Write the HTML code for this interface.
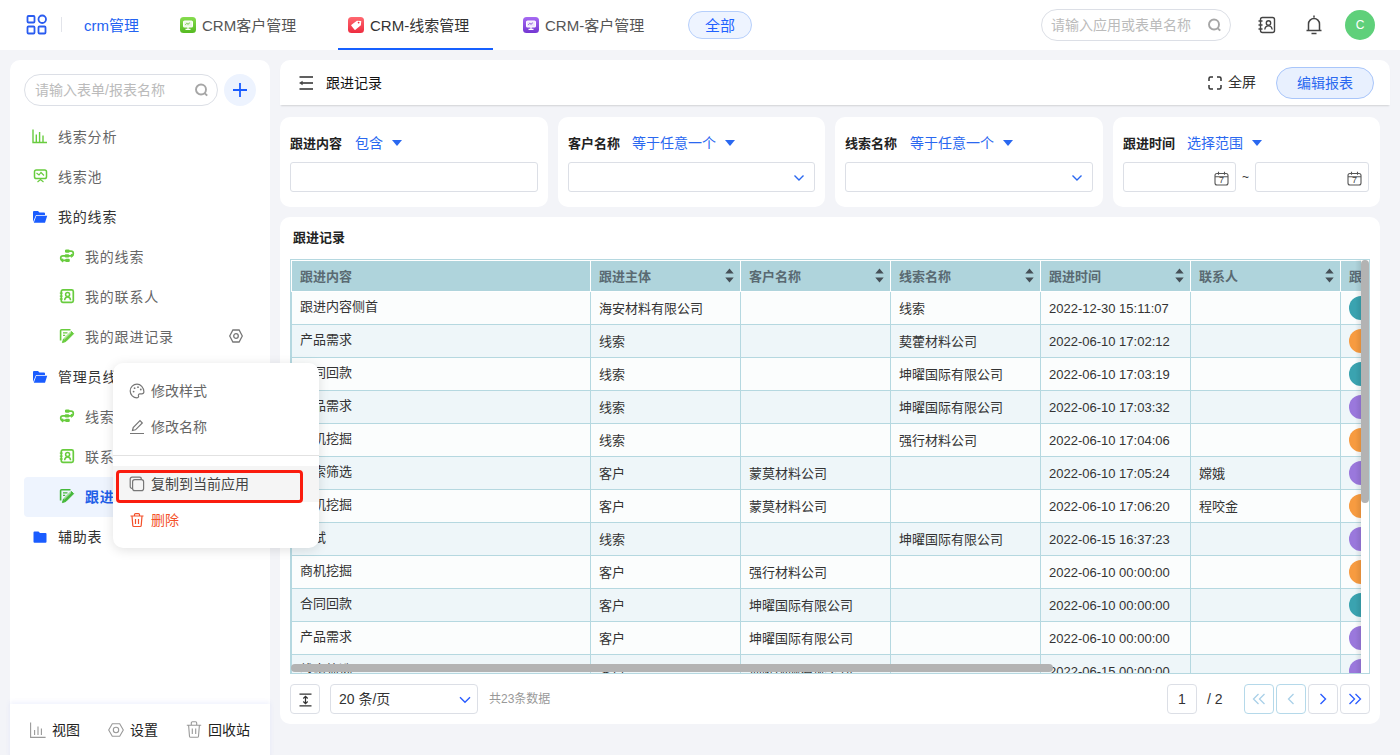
<!DOCTYPE html>
<html lang="zh-CN">
<head>
<meta charset="utf-8">
<title>CRM-线索管理</title>
<style>
*{box-sizing:border-box;margin:0;padding:0}
html,body{width:1400px;height:755px;overflow:hidden}
body{background:#f3f4f8;font-family:"Liberation Sans","Noto Sans CJK SC",sans-serif;font-size:14px;color:#333;position:relative}
.abs{position:absolute}
/* top bar */
#top{left:0;top:0;width:1400px;height:50px;background:#fff}
#top .t{position:absolute;top:1px;height:50px;line-height:50px;font-size:15px;color:#555;white-space:nowrap}
#top .blue{color:#2463f2}
.appico{position:absolute;top:17px;width:16px;height:16px;border-radius:3.500px}
/* sidebar */
#side{left:10px;top:60px;width:260px;height:700px;background:#fff;border-radius:10px 10px 0 0}
.search{position:absolute;border:1px solid #dcdfe6;border-radius:16px;background:#fff;color:#bbb;font-size:14px}
.nav{position:absolute;left:0;width:260px;height:40px;line-height:40px;font-size:14px;color:#666;white-space:nowrap}
.nav .ic{position:absolute;top:11px;width:16px;height:16px}
.nav .tx{position:absolute;top:0;letter-spacing:.8px}
/* main */
.card{position:absolute;background:#fff;border-radius:10px}
.flabel{position:absolute;top:16px;font-size:13px;font-weight:bold;color:#222;white-space:nowrap}
.fop{position:absolute;top:15px;font-size:14px;color:#2a68f0;white-space:nowrap}
.fin{position:absolute;top:45px;height:30px;border:1px solid #dcdfe6;border-radius:3px;background:#fff}
.tri{position:absolute;top:23px;width:0;height:0;border-left:5px solid transparent;border-right:5px solid transparent;border-top:6px solid #2a68f0}
/* table */
#tbl{position:absolute;left:290px;top:259px;width:1080px;height:415px;border:1px solid #b5d8e0;overflow:hidden;background:#fff}
table{border-collapse:separate;border-spacing:0;table-layout:fixed;width:1199px;font-size:13px;color:#333}
th{height:32px;background:#afd4dc;color:#5a6a72;font-weight:bold;text-align:left;padding:0 8px 2px;border-left:1px solid #fff;border-top:1px solid #fff;border-bottom:1px solid #fff;position:relative;white-space:nowrap}
td{height:33px;padding:0 8px 2px;border-left:1px solid #b5d8e0;border-bottom:1px solid #b5d8e0;white-space:nowrap;overflow:hidden}
tr:nth-child(odd) td{background:#fbfdfd}
tr:nth-child(even) td{background:#eef6f9}
.sort{position:absolute;right:6px;top:7px;width:9px;height:15px}
td:first-child{padding-bottom:6px}td:nth-child(5){padding-bottom:0}td.avc{padding:0 8px}.av{display:block;width:24px;height:24px;border-radius:12px;margin:0}
/* popup */
#pop{left:113px;top:363px;width:206px;height:185px;background:#fff;border-radius:10px;box-shadow:0 2px 12px rgba(0,0,0,.12)}
.mi{position:absolute;left:0;width:206px;height:36px;line-height:36px;font-size:14px;color:#666}
.mi span{position:absolute;left:38px;top:0;white-space:nowrap}
.mi svg{position:absolute;left:16px;top:10px}
/* pager */
.pbtn{position:absolute;top:684px;height:30px;border:1px solid #dcdfe6;border-radius:4px;background:#fff}
</style>
</head>
<body>

<!-- TOP BAR -->
<div id="top" class="abs">
  <svg class="abs" style="left:26px;top:14px" width="22" height="22" viewBox="0 0 22 22" fill="none" stroke="#2a5cf0" stroke-width="1.8">
    <rect x="1.5" y="2" width="7" height="6.5" rx="1"/><rect x="12.5" y="1.5" width="7.5" height="7.5" rx="3.7"/>
    <rect x="1.5" y="12.5" width="7" height="7" rx="1"/><rect x="12.5" y="12.5" width="7" height="7" rx="1"/>
  </svg>
  <div class="abs" style="left:61px;top:17px;width:1px;height:15px;background:#e2e4ea"></div>
  <div class="t blue" style="left:84px">crm管理</div>
  <svg class="appico" style="left:180px;background:linear-gradient(#86dc4e,#55ba22)" viewBox="0 0 16 16" fill="none" stroke="#fff" stroke-width="1.200"><rect x="3.600" y="4" width="8.800" height="6" rx="1" fill="#fff" fill-opacity=".85"/><path d="M8 10v1.800M5.500 12.300h5"/><path d="M5.300 7.800l1.500-1.500 1.200 1 1.800-1.500" stroke="#55ba22" stroke-width=".8"/></svg>
  <div class="t" style="left:202px">CRM客户管理</div>
  <svg class="appico" style="left:348px;background:linear-gradient(#ff6870,#ee2c40)" viewBox="0 0 16 16"><path d="M8.300 3.600l4.300-.4.300 4.400-4.800 5.200a.8.800 0 0 1-1.100 0L3.500 9.500a.8.800 0 0 1 0-1.100z" fill="#fff" transform="rotate(8 8 8)"/><circle cx="10.600" cy="5.600" r=".9" fill="#ee2c40"/></svg>
  <div class="t" style="left:370px;color:#333">CRM-线索管理</div>
  <div class="abs" style="left:338px;top:48px;width:155px;height:2px;background:#1660ff"></div>
  <svg class="appico" style="left:523px;background:linear-gradient(#a66af2,#7436d2)" viewBox="0 0 16 16" fill="none" stroke="#fff" stroke-width="1.200"><rect x="3.600" y="4" width="8.800" height="6" rx="1" fill="#fff" fill-opacity=".85"/><path d="M8 10v1.800M5.500 12.300h5"/><path d="M5.300 7.800l1.500-1.500 1.200 1 1.800-1.500" stroke="#7436d2" stroke-width=".8"/></svg>
  <div class="t" style="left:545px">CRM-客户管理</div>
  <div class="abs blue" style="left:688px;top:11px;width:64px;height:28px;border:1px solid #b6cffb;background:#eef4ff;border-radius:14px;text-align:center;line-height:27px;font-size:15px;color:#1f62ff">全部</div>
  <div class="search" style="left:1041px;top:9px;width:190px;height:32px;line-height:30px;padding-left:9px">请输入应用或表单名称</div>
  <svg class="abs" style="left:1207px;top:17px" width="16" height="16" viewBox="0 0 16 16" fill="none" stroke="#a6a6a6" stroke-width="1.9"><circle cx="7" cy="7.5" r="5"/><path d="M10.8 11.3l2.4 2.4"/></svg>
  <svg class="abs" style="left:1257px;top:15px" width="20" height="20" viewBox="0 0 20 20" fill="none" stroke="#444" stroke-width="1.4"><rect x="3.5" y="2.5" width="14" height="15" rx="2"/><path d="M1.5 6h4M1.5 10h4M1.5 14h4"/><circle cx="11.5" cy="8" r="2.2"/><path d="M7.8 14.5c.3-2.4 1.8-3.6 3.7-3.6s3.4 1.2 3.7 3.6"/></svg>
  <svg class="abs" style="left:1304px;top:14px" width="20" height="22" viewBox="0 0 20 22" fill="none" stroke="#444" stroke-width="1.5"><path d="M10 1.5v2M4.5 16V10a5.5 5.500 0 0 1 11 0v6M2.5 16.500h15M7.500 19.500h5"/></svg>
  <div class="abs" style="left:1345px;top:10px;width:30px;height:30px;border-radius:15px;background:#5fd07a;color:#fff;text-align:center;line-height:30px;font-size:12px">C</div>
</div>

<!-- SIDEBAR -->
<div id="side" class="abs">
  <div class="search" style="left:14px;top:14px;width:194px;height:32px;line-height:30px;padding-left:10px">请输入表单/报表名称</div>
  <svg class="abs" style="left:184px;top:22px" width="16" height="16" viewBox="0 0 16 16" fill="none" stroke="#a6a6a6" stroke-width="1.9"><circle cx="7" cy="7.5" r="5"/><path d="M10.8 11.3l2.4 2.4"/></svg>
  <div class="abs" style="left:214px;top:14px;width:32px;height:32px;border-radius:16px;background:#edf3fe"></div>
  <svg class="abs" style="left:222px;top:22px" width="16" height="16" viewBox="0 0 16 16" stroke="#1a5cff" stroke-width="1.8"><path d="M8 1v14M1 8h14"/></svg>

  <div class="nav" style="top:57px"><svg class="ic" style="left:22px" viewBox="0 0 16 16" fill="none" stroke="#68cc3e" stroke-width="1.4"><path d="M1 1.500v13h14M4.300 6.500v8M7.600 4v10.500M11 7.500v7"/></svg><span class="tx" style="left:48px">线索分析</span></div>
  <div class="nav" style="top:97px"><svg class="ic" style="left:23px" viewBox="0 0 16 16" fill="none" stroke="#68cc3e" stroke-width="1.5"><rect x="1.500" y="2" width="12" height="8.500" rx="1.800"/><path d="M3.500 5l2.500 2 2-2.500 3 3M7.500 10.500v1M4.500 14l3-2.500 3 2.500" stroke-width="1.200"/></svg><span class="tx" style="left:48px">线索池</span></div>
  <div class="nav" style="top:137px;color:#333"><svg class="ic" style="left:22px" viewBox="0 0 16 16"><g transform="translate(0,1)"><path d="M1 3a1 1 0 0 1 1-1h4l1.500 1.500H12a1 1 0 0 1 1 1V6H4L1 13z" fill="#1a5cff"/><path d="M4.300 6.700H15.200L13 13.800H1.800z" fill="#1a5cff"/></g></svg><span class="tx" style="left:48px">我的线索</span></div>
  <div class="nav" style="top:177px"><svg class="ic" style="left:49px" viewBox="0 0 16 16" fill="none" stroke="#68cc3e" stroke-width="1.700"><path d="M6 3.200h6a2.300 2.300 0 0 1 0 4.600H4a2.300 2.300 0 0 0 0 4.600h5"/><rect x="6" y="1.600" width="4.600" height="3.200" rx="1.200" fill="#68cc3e" stroke="none"/><rect x="5.700" y="6.200" width="4.600" height="3.200" rx="1.200" fill="#68cc3e" stroke="none"/><rect x="6.200" y="10.800" width="4.600" height="3.200" rx="1.200" fill="#68cc3e" stroke="none"/><path d="M12 6.200l1.800 1.600L12 9.400M4.200 10.800l-1.800 1.600 1.800 1.600" stroke-width="1.200"/></svg><span class="tx" style="left:75px">我的线索</span></div>
  <div class="nav" style="top:217px"><svg class="ic" style="left:49px" viewBox="0 0 16 16" fill="none" stroke="#68cc3e" stroke-width="1.700"><rect x="2.300" y="1.800" width="12" height="12.600" rx="1.600"/><path d="M.8 5.200h2.800M.8 8.100h2.800M.8 11h2.800" stroke-width="1.300"/><circle cx="8.600" cy="6.400" r="2" stroke-width="1.500"/><path d="M5.600 12.200c.2-2.200 1.400-3.300 3-3.300s2.800 1.100 3 3.300" stroke-width="1.500"/></svg><span class="tx" style="left:75px">我的联系人</span></div>
  <div class="nav" style="top:257px"><svg class="ic" style="left:49px" viewBox="0 0 16 16" fill="none" stroke="#68cc3e" stroke-width="1.600"><path d="M11.500 1.800H2.600a1 1 0 0 0-1 1V12.500"/><path d="M4 4.800h4.500M4 7.400h2.200" stroke-width="1.300"/><path d="M12.300 3.400l2.300 2.300-7.800 7.800-3.400 1.100 1.100-3.400z" fill="#68cc3e" stroke-width="1"/><path d="M5.200 11.200l6.800-6.800" stroke="#fff" stroke-width=".7"/></svg><span class="tx" style="left:75px">我的跟进记录</span></div>
<svg class="abs" style="left:219px;top:269px" width="14" height="14" viewBox="0 0 14 14" fill="none" stroke="#777" stroke-width="1.300"><path d="M3.900 1h6.200L13.300 7l-3.200 6H3.900L.7 7z"/><circle cx="7" cy="7" r="2.300"/></svg>
  <div class="nav" style="top:297px;color:#333"><svg class="ic" style="left:22px" viewBox="0 0 16 16"><g transform="translate(0,1)"><path d="M1 3a1 1 0 0 1 1-1h4l1.500 1.500H12a1 1 0 0 1 1 1V6H4L1 13z" fill="#1a5cff"/><path d="M4.300 6.700H15.200L13 13.800H1.800z" fill="#1a5cff"/></g></svg><span class="tx" style="left:48px">管理员线索</span></div>
  <div class="nav" style="top:337px"><svg class="ic" style="left:49px" viewBox="0 0 16 16" fill="none" stroke="#68cc3e" stroke-width="1.700"><path d="M6 3.200h6a2.300 2.300 0 0 1 0 4.600H4a2.300 2.300 0 0 0 0 4.600h5"/><rect x="6" y="1.600" width="4.600" height="3.200" rx="1.200" fill="#68cc3e" stroke="none"/><rect x="5.700" y="6.200" width="4.600" height="3.200" rx="1.200" fill="#68cc3e" stroke="none"/><rect x="6.200" y="10.800" width="4.600" height="3.200" rx="1.200" fill="#68cc3e" stroke="none"/><path d="M12 6.200l1.800 1.600L12 9.400M4.200 10.800l-1.800 1.600 1.800 1.600" stroke-width="1.200"/></svg><span class="tx" style="left:75px">线索</span></div>
  <div class="nav" style="top:377px"><svg class="ic" style="left:49px" viewBox="0 0 16 16" fill="none" stroke="#68cc3e" stroke-width="1.700"><rect x="2.300" y="1.800" width="12" height="12.600" rx="1.600"/><path d="M.8 5.200h2.800M.8 8.100h2.800M.8 11h2.800" stroke-width="1.300"/><circle cx="8.600" cy="6.400" r="2" stroke-width="1.500"/><path d="M5.600 12.200c.2-2.200 1.400-3.300 3-3.300s2.800 1.100 3 3.300" stroke-width="1.500"/></svg><span class="tx" style="left:75px">联系人</span></div>
  <div class="abs" style="left:14px;top:417px;width:232px;height:40px;background:#eef4fe;border-radius:4px"></div>
  <div class="nav" style="top:417px;color:#1f5fe8;font-weight:bold"><svg class="ic" style="left:49px" viewBox="0 0 16 16" fill="none" stroke="#45b83a" stroke-width="1.600"><path d="M11.500 1.800H2.600a1 1 0 0 0-1 1V12.500"/><path d="M4 4.800h4.500M4 7.400h2.200" stroke-width="1.300"/><path d="M12.300 3.400l2.300 2.300-7.800 7.800-3.400 1.100 1.100-3.400z" fill="#45b83a" stroke-width="1"/><path d="M5.200 11.200l6.800-6.800" stroke="#fff" stroke-width=".7"/></svg><span class="tx" style="left:75px">跟进记录</span></div>
  <div class="nav" style="top:457px;color:#333"><svg class="ic" style="left:22px" viewBox="0 0 16 16"><path transform="translate(0,1)" d="M1.500 3.500a1 1 0 0 1 1-1h4l1.500 1.500H13.500a1 1 0 0 1 1 1V12.800a1 1 0 0 1-1 1h-11a1 1 0 0 1-1-1z" fill="#1a5cff"/></svg><span class="tx" style="left:48px">辅助表</span></div>

  <div class="abs" style="left:0;top:644px;width:260px;height:56px;box-shadow:0 -2px 5px rgba(90,110,230,.09);background:#fff"></div>
  <svg class="abs" style="left:20px;top:662px" width="16" height="16" viewBox="0 0 16 16" fill="none" stroke="#999" stroke-width="1.100"><path d="M.6 .5v14.900h15M4.600 8v5M8 4.500v8.500M11.400 6.500v6.500"/></svg>
  <svg class="abs" style="left:98px;top:663px" width="16" height="14" viewBox="0 0 16 14" fill="none" stroke="#999" stroke-width="1.100"><path d="M4.300 .8h7.400L15.300 7l-3.600 6.200H4.300L.7 7z"/><circle cx="8" cy="7" r="2.700"/></svg>
  <svg class="abs" style="left:176px;top:661px" width="16" height="17" viewBox="0 0 16 17" fill="none" stroke="#999" stroke-width="1.100"><path d="M.8 4.200h14.400M5.300 4V2a1.200 1.200 0 0 1 1.200-1.200h3A1.200 1.200 0 0 1 10.700 2v2M2.600 4.200l.9 11a1.200 1.200 0 0 0 1.200 1.100h6.600a1.200 1.200 0 0 0 1.200-1.100l.9-11M6.300 7.500v5.500M9.700 7.500v5.500"/></svg>
  <div class="nav" style="top:650px;color:#222;font-size:14px"><span class="tx" style="left:42px;letter-spacing:0">视图</span><span class="tx" style="left:120px;letter-spacing:0">设置</span><span class="tx" style="left:198px;letter-spacing:0">回收站</span></div>
</div>

<!-- MAIN HEADER -->
<div class="card" style="left:280px;top:60px;width:1110px;height:45px;border-radius:10px 10px 0 0;box-shadow:0 2px 2px -1px rgba(0,0,0,.14)">
  <svg class="abs" style="left:19px;top:16px" width="14" height="14" viewBox="0 0 14 14" fill="none" stroke="#606060" stroke-width="1.800"><path d="M.5 1h13.500M3 7h11M.5 13h13.500"/><path d="M0 7l3.600-2.300v4.600z" fill="#444" stroke="none"/></svg>
  <div class="abs" style="left:46px;top:1px;line-height:45px;font-size:14px;color:#111">跟进记录</div>
  <svg class="abs" style="left:928px;top:16px" width="14" height="14" viewBox="0 0 14 14" fill="none" stroke="#333" stroke-width="1.5"><path d="M1 5V2.500A1.500 1.500 0 0 1 2.500 1H5M9 1h2.500A1.500 1.500 0 0 1 13 2.500V5M13 9v2.500a1.500 1.500 0 0 1-1.500 1.500H9M5 13H2.500A1.500 1.500 0 0 1 1 11.500V9"/></svg>
  <div class="abs" style="left:948px;top:0;line-height:45px;font-size:14px;color:#333">全屏</div>
  <div class="abs" style="left:996px;top:7px;width:98px;height:32px;border:1px solid #a9c6fa;background:#e8f0fe;border-radius:16px;text-align:center;line-height:30px;font-size:14px;color:#2a68f0">编辑报表</div>
</div>

<!-- FILTERS -->
<div class="card" style="left:280px;top:117px;width:268px;height:90px">
  <div class="flabel" style="left:10px">跟进内容</div><div class="fop" style="left:75px">包含</div><div class="tri" style="left:112px"></div>
  <div class="fin" style="left:10px;width:248px"></div>
</div>
<div class="card" style="left:558px;top:117px;width:267px;height:90px">
  <div class="flabel" style="left:10px">客户名称</div><div class="fop" style="left:74px">等于任意一个</div><div class="tri" style="left:167px"></div>
  <div class="fin" style="left:10px;width:247px"></div>
  <svg class="abs" style="left:235px;top:57px" width="12" height="8" viewBox="0 0 12 8" fill="none" stroke="#2a68f0" stroke-width="1.4"><path d="M1.500 1.500L6 6l4.500-4.500"/></svg>
</div>
<div class="card" style="left:835px;top:117px;width:268px;height:90px">
  <div class="flabel" style="left:10px">线索名称</div><div class="fop" style="left:75px">等于任意一个</div><div class="tri" style="left:168px"></div>
  <div class="fin" style="left:10px;width:248px"></div>
  <svg class="abs" style="left:236px;top:57px" width="12" height="8" viewBox="0 0 12 8" fill="none" stroke="#2a68f0" stroke-width="1.4"><path d="M1.500 1.500L6 6l4.500-4.500"/></svg>
</div>
<div class="card" style="left:1113px;top:117px;width:267px;height:90px">
  <div class="flabel" style="left:10px">跟进时间</div><div class="fop" style="left:74px">选择范围</div><div class="tri" style="left:139px"></div>
  <div class="fin" style="left:10px;width:113px"></div>
  <svg class="abs" style="left:101px;top:54px" width="15" height="15" viewBox="0 0 15 15" fill="none" stroke="#555" stroke-width="1.100"><rect x="1" y="2.500" width="13" height="11.500" rx="2"/><path d="M1 5.800h13M4.500 .8v3M10.500 .8v3"/><text x="7.500" y="12.300" font-size="9" text-anchor="middle" fill="#444" stroke="none" font-family="Liberation Sans,sans-serif">7</text></svg>
  <div class="abs" style="left:129px;top:53px;font-size:12px;color:#333">~</div>
  <div class="fin" style="left:142px;width:114px"></div>
  <svg class="abs" style="left:234px;top:54px" width="15" height="15" viewBox="0 0 15 15" fill="none" stroke="#555" stroke-width="1.100"><rect x="1" y="2.500" width="13" height="11.500" rx="2"/><path d="M1 5.800h13M4.500 .8v3M10.500 .8v3"/><text x="7.500" y="12.300" font-size="9" text-anchor="middle" fill="#444" stroke="none" font-family="Liberation Sans,sans-serif">7</text></svg>
</div>

<!-- TABLE CARD -->
<div class="card" style="left:280px;top:217px;width:1100px;height:507px">
  <div class="abs" style="left:13px;top:10px;font-size:13px;font-weight:bold;color:#222">跟进记录</div>
</div>
<div id="tbl">
<table>
<colgroup><col style="width:299px"><col style="width:150px"><col style="width:150px"><col style="width:150px"><col style="width:150px"><col style="width:150px"><col style="width:150px"></colgroup>
<thead><tr><th>跟进内容</th><th>跟进主体<svg class="sort" viewBox="0 0 9 15"><path d="M4.500 0.500L8.700 5.500H.3zM4.500 14.500L.3 9.500h8.400z" fill="#454f57"/></svg></th><th>客户名称<svg class="sort" viewBox="0 0 9 15"><path d="M4.500 0.500L8.700 5.500H.3zM4.500 14.500L.3 9.500h8.400z" fill="#454f57"/></svg></th><th>线索名称<svg class="sort" viewBox="0 0 9 15"><path d="M4.500 0.500L8.700 5.500H.3zM4.500 14.500L.3 9.500h8.400z" fill="#454f57"/></svg></th><th>跟进时间<svg class="sort" viewBox="0 0 9 15"><path d="M4.500 0.500L8.700 5.500H.3zM4.500 14.500L.3 9.500h8.400z" fill="#454f57"/></svg></th><th>联系人<svg class="sort" viewBox="0 0 9 15"><path d="M4.500 0.500L8.700 5.500H.3zM4.500 14.500L.3 9.500h8.400z" fill="#454f57"/></svg></th><th>跟进人</th></tr></thead>
<tbody>
<tr><td>跟进内容侧首</td><td>海安材料有限公司</td><td></td><td>线索</td><td>2022-12-30 15:11:07</td><td></td><td class="avc"><i class="av" style="background:#3aa3b0"></i></td></tr>
<tr><td>产品需求</td><td>线索</td><td></td><td>葜藿材料公司</td><td>2022-06-10 17:02:12</td><td></td><td class="avc"><i class="av" style="background:#f79b40"></i></td></tr>
<tr><td>合同回款</td><td>线索</td><td></td><td>坤曜国际有限公司</td><td>2022-06-10 17:03:19</td><td></td><td class="avc"><i class="av" style="background:#3aa3b0"></i></td></tr>
<tr><td>产品需求</td><td>线索</td><td></td><td>坤曜国际有限公司</td><td>2022-06-10 17:03:32</td><td></td><td class="avc"><i class="av" style="background:#9a78dc"></i></td></tr>
<tr><td>商机挖掘</td><td>线索</td><td></td><td>强行材料公司</td><td>2022-06-10 17:04:06</td><td></td><td class="avc"><i class="av" style="background:#f79b40"></i></td></tr>
<tr><td>线索筛选</td><td>客户</td><td>蒙莫材料公司</td><td></td><td>2022-06-10 17:05:24</td><td>嫦娥</td><td class="avc"><i class="av" style="background:#9a78dc"></i></td></tr>
<tr><td>商机挖掘</td><td>客户</td><td>蒙莫材料公司</td><td></td><td>2022-06-10 17:06:20</td><td>程咬金</td><td class="avc"><i class="av" style="background:#f79b40"></i></td></tr>
<tr><td>测试</td><td>线索</td><td></td><td>坤曜国际有限公司</td><td>2022-06-15 16:37:23</td><td></td><td class="avc"><i class="av" style="background:#9a78dc"></i></td></tr>
<tr><td>商机挖掘</td><td>客户</td><td>强行材料公司</td><td></td><td>2022-06-10 00:00:00</td><td></td><td class="avc"><i class="av" style="background:#f79b40"></i></td></tr>
<tr><td>合同回款</td><td>客户</td><td>坤曜国际有限公司</td><td></td><td>2022-06-10 00:00:00</td><td></td><td class="avc"><i class="av" style="background:#3aa3b0"></i></td></tr>
<tr><td>产品需求</td><td>客户</td><td>坤曜国际有限公司</td><td></td><td>2022-06-10 00:00:00</td><td></td><td class="avc"><i class="av" style="background:#9a78dc"></i></td></tr>
<tr><td>线索筛选</td><td>客户</td><td>坤曜国际有限公司</td><td></td><td>2022-06-15 00:00:00</td><td></td><td class="avc"><i class="av" style="background:#9a78dc"></i></td></tr>
</tbody>
</table>
</div>
<!-- scrollbars -->
<div class="abs" style="left:1355px;top:260px;width:6px;height:413px;background:linear-gradient(90deg,rgba(0,0,0,0),rgba(0,0,0,.09))"></div>
<div class="abs" style="left:1361px;top:260px;width:8px;height:413px;background:#fff"></div>
<div class="abs" style="left:291px;top:664px;width:762px;height:8px;border-radius:4px;background:#b3b3b3"></div>
<div class="abs" style="left:1361px;top:260px;width:8px;height:243px;border-radius:4px;background:#b3b3b3"></div>

<!-- PAGER -->
<div class="pbtn" style="left:290px;width:30px"><svg class="abs" style="left:8px;top:8px" width="13" height="14" viewBox="0 0 13 14" fill="none" stroke="#333" stroke-width="1.200"><path d="M.5 1.200h12M.5 12.800h12M6.500 3.500v7M4.300 5.500l2.200-2.200 2.200 2.200M4.300 8.500l2.200 2.200 2.200-2.200"/></svg></div>
<div class="pbtn" style="left:330px;width:148px;font-size:14px;line-height:28px;padding-left:8px;color:#333">20 条/页<svg class="abs" style="left:128px;top:11px" width="12" height="8" viewBox="0 0 12 8" fill="none" stroke="#2a5cff" stroke-width="1.400"><path d="M1 1.200L6 6.200l5-5"/></svg></div>
<div class="abs" style="left:489px;top:684px;line-height:30px;font-size:12px;color:#999">共23条数据</div>
<div class="pbtn" style="left:1167px;width:30px;text-align:center;line-height:28px;font-size:14px;color:#333">1</div>
<div class="abs" style="left:1207px;top:684px;line-height:30px;font-size:14px;color:#333">/ 2</div>
<div class="pbtn" style="left:1244px;width:30px;border-color:#b5d9ea"><svg class="abs" style="left:7px;top:8px" width="14" height="12" viewBox="0 0 14 12" fill="none" stroke="#a9d0e8" stroke-width="1.300"><path d="M6.500 1L1.500 6l5 5M12.500 1L7.500 6l5 5"/></svg></div>
<div class="pbtn" style="left:1276px;width:30px;border-color:#b5d9ea"><svg class="abs" style="left:10px;top:8px" width="8" height="12" viewBox="0 0 8 12" fill="none" stroke="#a9d0e8" stroke-width="1.300"><path d="M6.500 1L1.500 6l5 5"/></svg></div>
<div class="pbtn" style="left:1308px;width:30px"><svg class="abs" style="left:10px;top:8px" width="8" height="12" viewBox="0 0 8 12" fill="none" stroke="#2a5cff" stroke-width="1.400"><path d="M1.500 1l5 5-5 5"/></svg></div>
<div class="pbtn" style="left:1340px;width:30px"><svg class="abs" style="left:7px;top:8px" width="14" height="12" viewBox="0 0 14 12" fill="none" stroke="#2a5cff" stroke-width="1.300"><path d="M1.500 1l5 5-5 5M7.500 1l5 5-5 5"/></svg></div>

<!-- POPUP -->
<div id="pop" class="abs">
  <div class="mi" style="top:10px"><svg width="16" height="16" viewBox="0 0 16 16" fill="none" stroke="#777" stroke-width="1.200"><path d="M8 1.200a6.800 6.800 0 1 0 0 13.600c1.300 0 1.900-.9 1.500-1.900-.4-1.100.2-2 1.400-2h2a2 2 0 0 0 2-2.100C14.700 4.600 11.700 1.200 8 1.200z"/><circle cx="4.600" cy="8.600" r=".9" fill="#777" stroke="none"/><circle cx="5.600" cy="5.200" r=".9" fill="#777" stroke="none"/><circle cx="9" cy="4.200" r=".9" fill="#777" stroke="none"/><circle cx="11.800" cy="6.500" r=".9" fill="#777" stroke="none"/></svg><span>修改样式</span></div>
  <div class="mi" style="top:46px"><svg width="16" height="16" viewBox="0 0 16 16" fill="none" stroke="#777" stroke-width="1.200"><path d="M1 14.500h14M3.500 11.500l.7-3 6.800-6.800 2.300 2.300-6.800 6.800z"/></svg><span>修改名称</span></div>
  <div class="abs" style="left:0;top:92px;width:206px;height:1px;background:#e2e2e2"></div>
  <div class="abs" style="left:0;top:103px;width:206px;height:36px;background:#f5f5f5"></div>
  <div class="abs" style="left:3px;top:107px;width:187px;height:33px;border:3px solid #fa1c0e;border-radius:4px"></div>
  <div class="mi" style="top:103px;color:#444"><svg width="16" height="16" viewBox="0 0 16 16" fill="none" stroke="#777" stroke-width="1.200"><rect x="3.600" y="3.600" width="11" height="11" rx="2.200"/><path d="M12.400 3.600V3a1.800 1.800 0 0 0-1.800-1.800H3A1.800 1.800 0 0 0 1.200 3v7.600A1.800 1.800 0 0 0 3 12.400h.6"/></svg><span>复制到当前应用</span></div>
  <div class="mi" style="top:139px;color:#f4502a"><svg width="16" height="16" viewBox="0 0 16 16" fill="none" stroke="#f4502a" stroke-width="1.200"><path d="M1.500 4h13M5.500 4V2.600a1 1 0 0 1 1-1h3a1 1 0 0 1 1 1V4M3 4l.8 9.600a1 1 0 0 0 1 .9h6.400a1 1 0 0 0 1-.9L13 4M6.500 7v5M9.500 7v5"/></svg><span>删除</span></div>
</div>

</body>
</html>
